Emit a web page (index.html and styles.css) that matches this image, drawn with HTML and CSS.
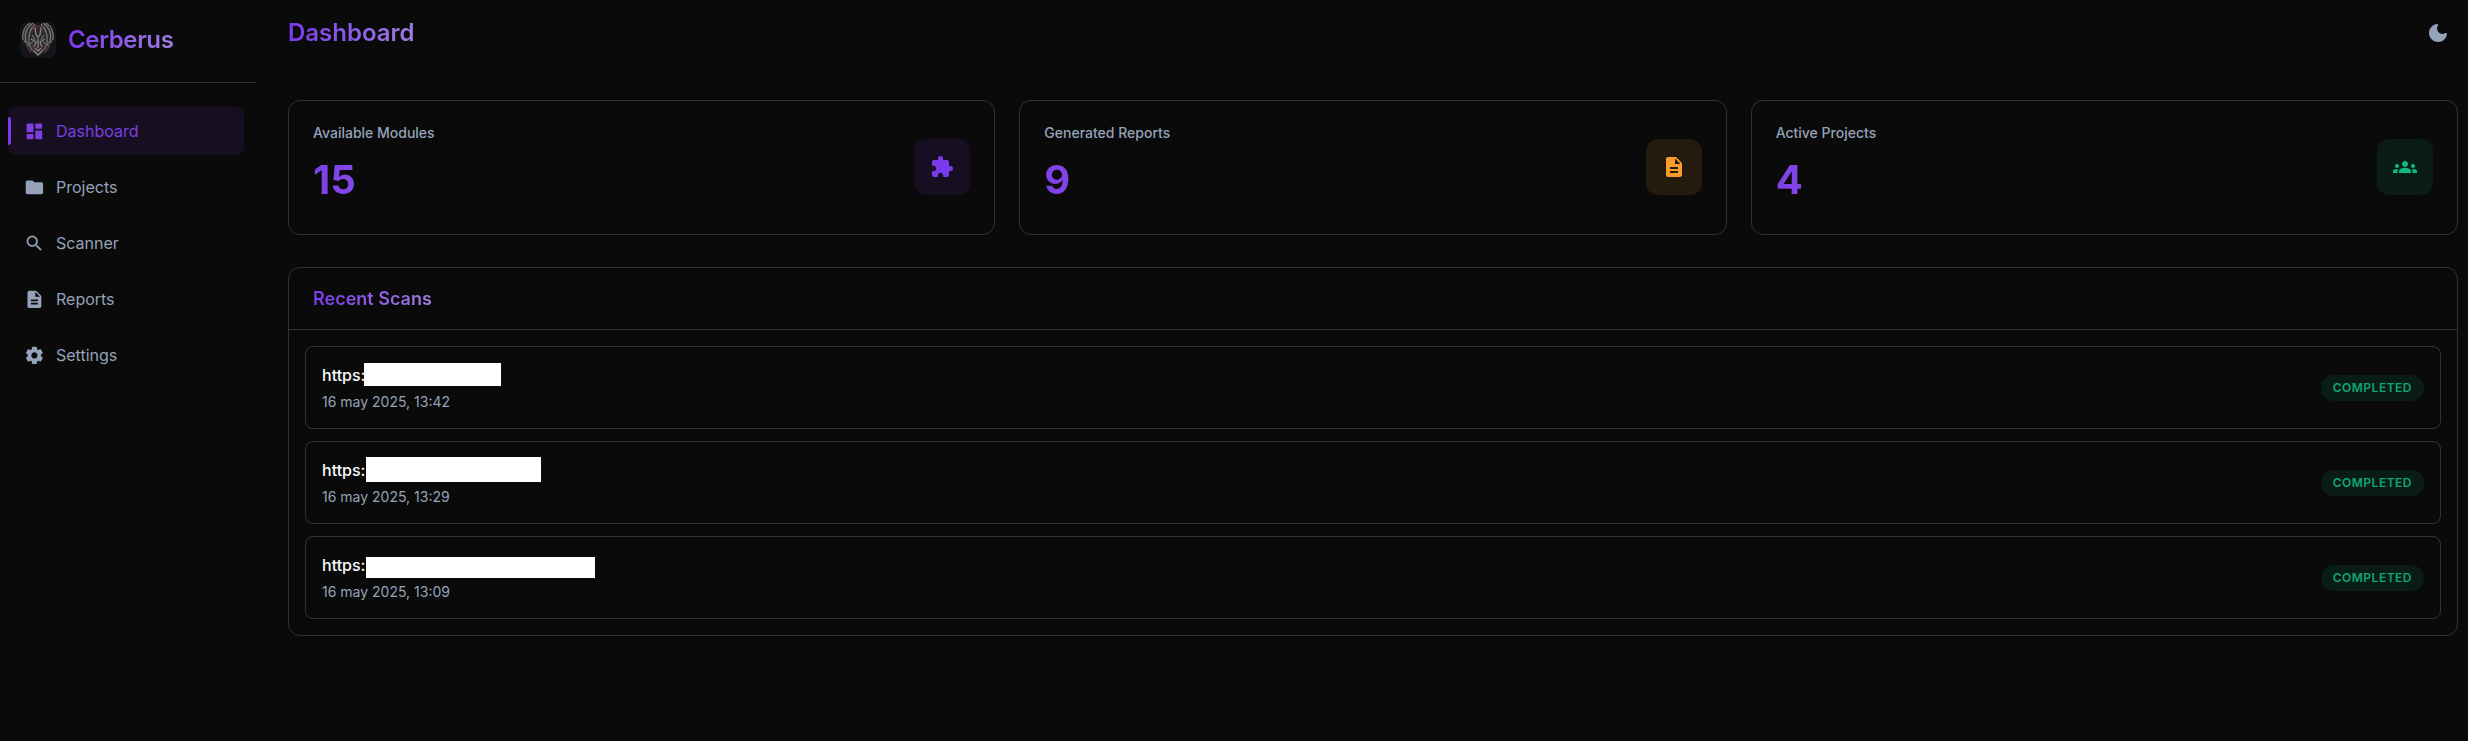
FILE: index.html
```html
<!DOCTYPE html>
<html lang="en">
<head>
<meta charset="utf-8">
<title>Cerberus</title>
<link rel="stylesheet" href="styles.css">
</head>
<body>
<svg width="0" height="0" class="defs">
  <symbol id="doc" viewBox="0 0 24 24"><path d="M14 2H6c-1.1 0-1.99.9-1.99 2L4 20c0 1.1.89 2 1.99 2H18c1.1 0 2-.9 2-2V8l-6-6zm2 16H8v-2h8v2zm0-4H8v-2h8v2zm-3-5V3.500L18.500 9H13z"/></symbol>
</svg>
<div class="app">
  <aside class="sidebar">
    <div class="brand">
      <svg class="logo" viewBox="0 0 36 36">
        <rect width="36" height="36" rx="8" fill="#12151a"/>
        <path d="M4 10L3 19l5 9 10 6 10-6 5-9-1-9-6-7H10z" fill="#292a2e"/>
        <g fill="none" stroke-width="1.300">
          <path d="M10 1C4 5 2 11 3 18M13 1C7 5 4 12 6 20M15 2C10 7 8 13 9 21M26 1c6 4 8 10 7 17M23 1c6 4 9 11 7 19M21 2c5 5 7 11 6 19" stroke="#777976"/>
          <path d="M4 19l5 3 3 6M32 19l-5 3-3 6M7 24l6-4M29 24l-6-4M12 13l3 5M24 13l-3 5" stroke="#6a706d"/>
          <path d="M15 5l1 8 2 2 2-2 1-8M11 17l5 3-2 5M25 17l-5 3 2 5M13 28l5 5 5-5M18 16v10M15 26l3 3 3-3" stroke="#8a8681"/>
          <path d="M13 4l1 6M23 4l-1 6M7 25l4 6M29 25l-4 6M12 22l2 6M24 22l-2 6M16 4h4" stroke="#6b2636"/>
        </g>
      </svg>
      <span class="brand-name">Cerberus</span>
    </div>
    <nav class="nav">
      <a class="nav-item active"><svg viewBox="0 0 24 24"><path d="M4 13h6c.55 0 1-.45 1-1V4c0-.55-.45-1-1-1H4c-.55 0-1 .45-1 1v8c0 .55.45 1 1 1zm0 8h6c.55 0 1-.45 1-1v-4c0-.55-.45-1-1-1H4c-.55 0-1 .45-1 1v4c0 .55.45 1 1 1zm10 0h6c.55 0 1-.45 1-1v-8c0-.55-.45-1-1-1h-6c-.55 0-1 .45-1 1v8c0 .55.45 1 1 1zM13 4v4c0 .55.45 1 1 1h6c.55 0 1-.45 1-1V4c0-.55-.45-1-1-1h-6c-.55 0-1 .45-1 1z"/></svg>Dashboard</a>
      <a class="nav-item"><svg viewBox="0 0 24 24"><path d="M10 4H4c-1.100 0-1.990.9-1.990 2L2 18c0 1.100.9 2 2 2h16c1.100 0 2-.9 2-2V8c0-1.100-.9-2-2-2h-8l-2-2z"/></svg>Projects</a>
      <a class="nav-item"><svg viewBox="0 0 24 24"><path d="M15.500 14h-.79l-.28-.27A6.471 6.471 0 0 0 16 9.500 6.500 6.500 0 1 0 9.500 16c1.610 0 3.090-.59 4.230-1.570l.27.28v.79l5 4.990L20.490 19l-4.990-5zm-6 0C7.010 14 5 11.990 5 9.500S7.010 5 9.500 5 14 7.010 14 9.500 11.990 14 9.500 14z"/></svg>Scanner</a>
      <a class="nav-item"><svg><use href="#doc"/></svg>Reports</a>
      <a class="nav-item"><svg viewBox="0 0 24 24"><path d="M19.500 12c0-.23-.01-.45-.03-.68l1.860-1.410c.4-.3.510-.86.260-1.300l-1.870-3.230c-.25-.44-.79-.62-1.250-.42l-2.150.91c-.37-.26-.76-.49-1.170-.68l-.29-2.310c-.06-.5-.49-.88-.99-.88h-3.730c-.51 0-.94.38-1 .88l-.29 2.310c-.41.19-.8.42-1.170.68l-2.150-.91c-.46-.2-1-.02-1.250.42L2.410 8.620c-.25.44-.14.99.26 1.300l1.860 1.410c-.02.22-.03.44-.03.67s.01.45.03.68l-1.860 1.410c-.4.3-.51.86-.26 1.300l1.870 3.230c.25.44.79.62 1.250.42l2.150-.91c.37.26.76.49 1.170.68l.29 2.310c.06.5.49.88.99.88h3.730c.5 0 .93-.38.990-.88l.29-2.310c.41-.19.8-.42 1.170-.68l2.150.91c.46.2 1 .02 1.250-.42l1.870-3.230c.25-.44.14-.99-.26-1.300l-1.860-1.410c.03-.23.04-.45.04-.68zm-7.460 3.500c-1.930 0-3.500-1.570-3.500-3.500s1.570-3.500 3.500-3.500 3.500 1.570 3.500 3.500-1.570 3.500-3.500 3.500z"/></svg>Settings</a>
    </nav>
  </aside>
  <div class="page">
    <header class="topbar">
      <h1>Dashboard</h1>
      <svg class="moon" viewBox="0 0 24 24"><path d="M11.010 3.050C6.510 3.540 3 7.360 3 12c0 4.970 4.030 9 9 9 4.630 0 8.450-3.500 8.950-8 .09-.79-.78-1.420-1.540-.95-.84.54-1.840.85-2.910.85-2.980 0-5.400-2.420-5.400-5.400 0-1.060.310-2.060.840-2.890.45-.67-.04-1.630-.93-1.560z"/></svg>
    </header>
    <main class="content">
      <section class="stats">
        <div class="card stat"><div><div class="label">Available Modules</div><div class="value">15</div></div>
          <div class="tile purple"><svg viewBox="0 0 24 24"><path d="M20.500 11H19V7c0-1.100-.9-2-2-2h-4V3.500a2.500 2.500 0 0 0-5 0V5H4c-1.100 0-1.990.9-1.990 2v3.800H3.500c1.490 0 2.700 1.210 2.700 2.700s-1.210 2.700-2.700 2.700H2V20c0 1.100.9 2 2 2h3.800v-1.500c0-1.490 1.210-2.700 2.700-2.700s2.700 1.210 2.700 2.700V22H17c1.100 0 2-.9 2-2v-4h1.500a2.500 2.500 0 0 0 0-5z"/></svg></div></div>
        <div class="card stat"><div><div class="label">Generated Reports</div><div class="value">9</div></div>
          <div class="tile orange"><svg><use href="#doc"/></svg></div></div>
        <div class="card stat"><div><div class="label">Active Projects</div><div class="value">4</div></div>
          <div class="tile green"><svg viewBox="0 0 24 24"><path d="M12 12.750c1.630 0 3.070.39 4.240.9 1.080.48 1.760 1.560 1.760 2.730V18H6v-1.610c0-1.180.68-2.260 1.760-2.730 1.170-.52 2.610-.91 4.240-.91zM4 13c1.100 0 2-.9 2-2s-.9-2-2-2-2 .9-2 2 .9 2 2 2zm1.130 1.100C4.760 14.040 4.390 14 4 14c-.99 0-1.930.21-2.780.58C.48 14.900 0 15.620 0 16.430V18h4.500v-1.610c0-.83.23-1.610.63-2.290zM20 13c1.100 0 2-.9 2-2s-.9-2-2-2-2 .9-2 2 .9 2 2 2zm4 3.430c0-.81-.48-1.530-1.220-1.850C21.930 14.210 20.990 14 20 14c-.39 0-.76.04-1.130.1.400.68.630 1.460.630 2.290V18H24v-1.570zM12 6c1.660 0 3 1.340 3 3s-1.340 3-3 3-3-1.340-3-3 1.340-3 3-3z"/></svg></div></div>
      </section>
      <section class="card scans">
        <div class="scans-head"><h2>Recent Scans</h2></div>
        <div class="scan-list">
          <div class="scan"><div><div class="url">https:<span class="mask mask-a"></span></div><div class="date">16 may 2025, 13:42</div></div><span class="badge">COMPLETED</span></div>
          <div class="scan"><div><div class="url">https:<span class="mask mask-b"></span></div><div class="date">16 may 2025, 13:29</div></div><span class="badge">COMPLETED</span></div>
          <div class="scan"><div><div class="url">https:<span class="mask mask-c"></span></div><div class="date">16 may 2025, 13:09</div></div><span class="badge">COMPLETED</span></div>
        </div>
      </section>
    </main>
  </div>
</div>
</body>
</html>
```

FILE: styles.css
```css
* { box-sizing: border-box; }
body { margin: 0; background: #0a0a0a; color: #f8fafc; font-family: Inter, "Liberation Sans", sans-serif; }
svg { fill: currentColor; display: block; }
.defs { position: absolute; }
h1, h2 { margin: 0; font-weight: 600; }
.app { display: flex; height: 741px; overflow: hidden; }

.sidebar { width: 256px; flex: none; }
.brand { height: 83px; padding: 0 20px 3px; display: flex; align-items: center; gap: 12px; border-bottom: 1px solid #333; }
.logo { width: 36px; height: 36px; }
.brand-name { font-size: 24px; line-height: 36px; font-weight: 600; letter-spacing: -0.35px; }
.brand-name, h1, h2, .value { background: linear-gradient(90deg, #7c3aed, #9f7de0); -webkit-background-clip: text; background-clip: text; color: transparent; }
.nav { padding: 24px 12px 0 8px; display: flex; flex-direction: column; gap: 8px; }
.nav-item { position: relative; height: 48px; padding-left: 15.6px; display: flex; align-items: center; gap: 11.6px; border-radius: 8px; font-size: 16px; color: #94a3b8; }
.nav-item svg { width: 20.8px; height: 20.8px; }
.nav-item.active { background: #170f21; color: #7c3fe0; }
.nav-item.active::before { content: ""; position: absolute; left: 0; top: 20%; width: 3px; height: 60%; background: #7c3aed; border-radius: 0 3px 3px 0; }

.page { flex: 1; min-width: 0; }
.topbar { height: 69px; padding: 0 18px 3px 32px; display: flex; align-items: center; justify-content: space-between; border-bottom: 1px solid #0d0d0d; }
h1 { font-size: 24px; line-height: 36px; }
.moon { width: 24px; height: 24px; color: #94a3b8; }
.content { padding: 31px 10px 0 32px; display: flex; flex-direction: column; gap: 32px; }
.card { border: 1px solid #333; border-radius: 12px; }
.stats { display: grid; grid-template-columns: repeat(3, 1fr); gap: 24px; }
.stat { height: 135px; padding: 0 24px 1px; display: flex; align-items: center; justify-content: space-between; }
.label { font-size: 14px; line-height: 21px; font-weight: 500; color: #94a3b8; }
.value { font-size: 40px; line-height: 60px; font-weight: 700; margin: 7px 0 2px; background-image: linear-gradient(90deg, #7f40e8, #8b5ce0); }
.tile { width: 56px; height: 56px; border-radius: 12px; display: grid; place-items: center; }
.tile svg { width: 24px; height: 24px; }
.purple { background: #170f21; color: #7c3aed; }
.orange { background: #241a0e; color: #f89b2b; }
.green { background: #0a1c16; color: #10b981; }

.scans-head { height: 62px; padding: 0 24px; display: flex; align-items: center; border-bottom: 1px solid #333; }
h2 { font-size: 18px; line-height: 27px; }
.scan-list { padding: 16px; display: flex; flex-direction: column; gap: 12px; }
.scan { height: 83px; padding: 0 16px; border: 1px solid #333; border-radius: 8px; display: flex; align-items: center; justify-content: space-between; }
.url { position: relative; font-size: 16px; line-height: 24px; font-weight: 500; margin-bottom: 4px; }
.date { font-size: 14px; line-height: 21px; color: #94a3b8; }
.mask { position: absolute; background: #fff; }
.mask-a { left: 42px; top: 0; width: 137px; height: 23px; }
.mask-b { left: 44px; top: -1px; width: 175px; height: 25px; }
.mask-c { left: 44px; top: 4px; width: 229px; height: 21px; }
.badge { height: 26px; padding: 0 12px; border-radius: 13px; background: #0a1c16; color: #10a575; font-size: 12px; line-height: 26px; font-weight: 600; letter-spacing: 0.5px; }
```
